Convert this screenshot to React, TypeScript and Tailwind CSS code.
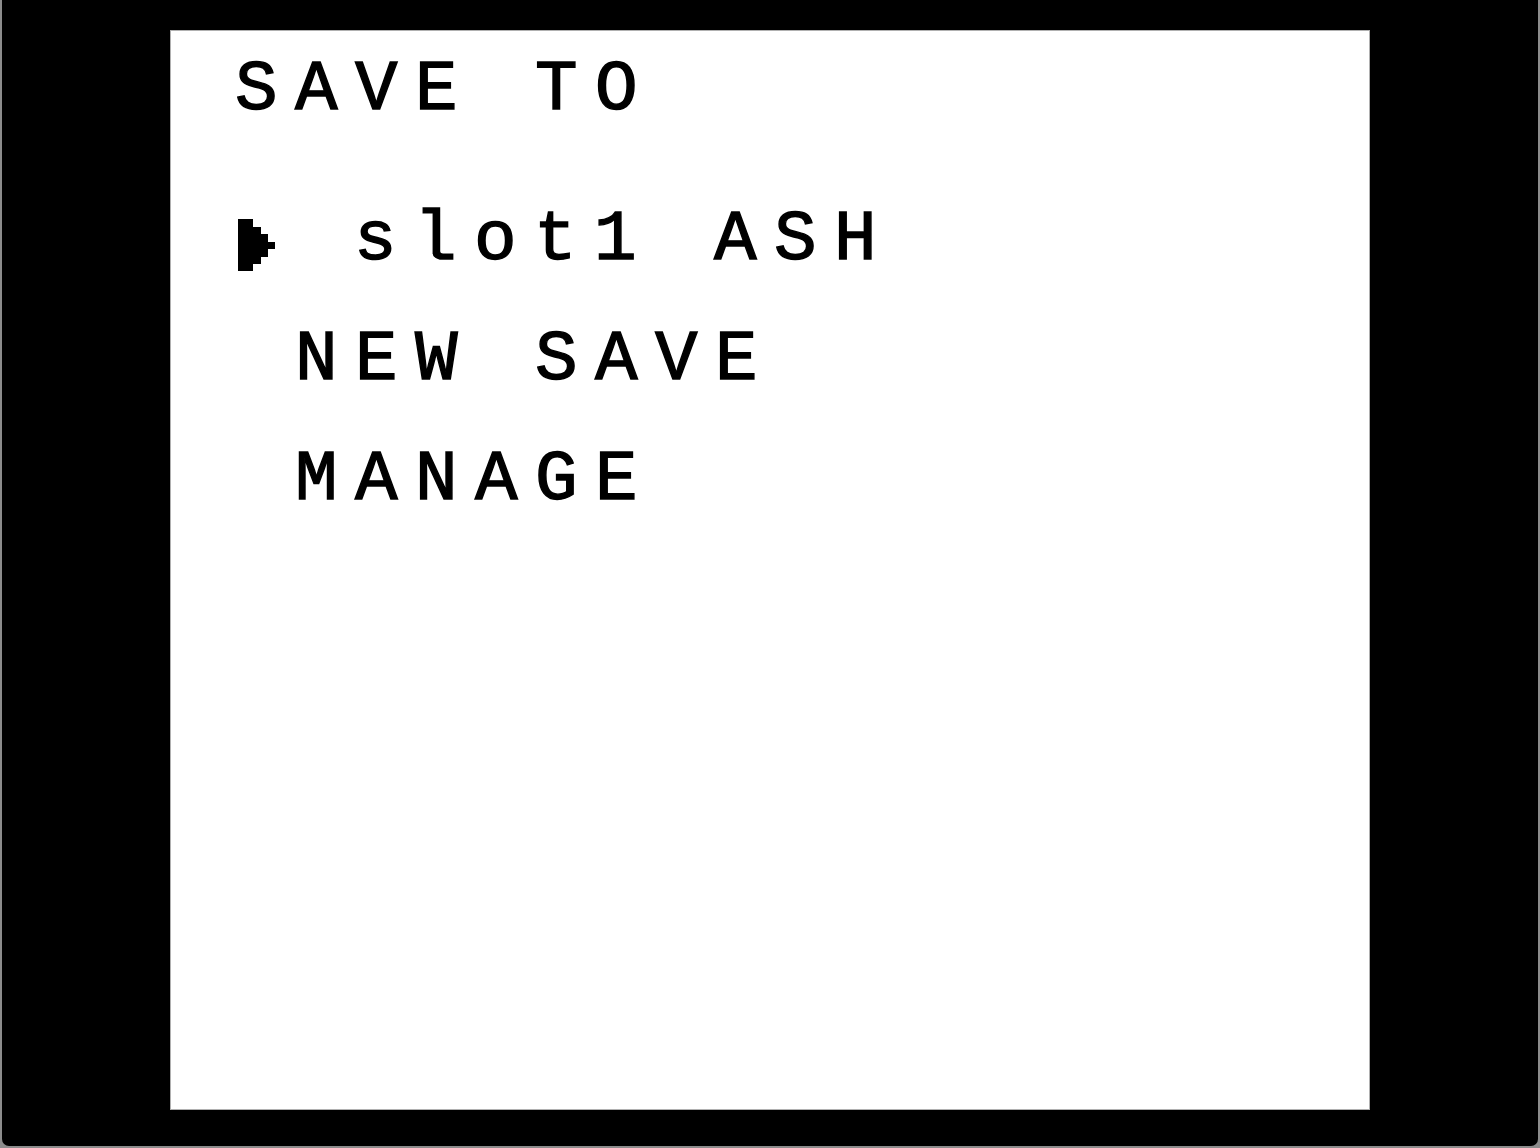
import React from "react";

const font = { fontFamily: '"Liberation Mono", "DejaVu Sans Mono", monospace' };

function Cursor() {
  return (
    <svg
      width="37.5"
      height="52.5"
      viewBox="0 0 5 7"
      className="block"
      shapeRendering="crispEdges"
    >
      <path d="M0 0H2V1H3V2H4V3H5V4H4V5H3V6H2V7H0Z" fill="#000" />
    </svg>
  );
}

export default function App() {
  return (
    <div className="w-full h-[1148px] bg-[#8c8c8c] px-[2px] pb-[2px] flex flex-col">
      <div className="flex-1 bg-black rounded-b-[7px] flex justify-center pt-[30px]">
        <div
          className="w-[1200px] h-[1080px] bg-white border border-[#b0b0b0] pl-[64px] text-black text-[71px] tracking-[17.4px] whitespace-pre [-webkit-text-stroke:1.4px_#000]"
          style={font}
        >
          <div className="-mt-[1px]">
            <div className="leading-[120px] h-[120px]">SAVE TO</div>
            <div className="h-[30px]" />
            <div className="leading-[120px] h-[120px] flex items-center">
              <div className="w-[60px] h-[120px] flex items-center justify-start pl-[3.5px] pt-[9.5px] -ml-[1px]">
                <Cursor />
              </div>
              <span> slot1 ASH</span>
            </div>
            <div className="leading-[120px] h-[120px]"> NEW SAVE</div>
            <div className="leading-[120px] h-[120px]"> MANAGE</div>
          </div>
        </div>
      </div>
    </div>
  );
}
